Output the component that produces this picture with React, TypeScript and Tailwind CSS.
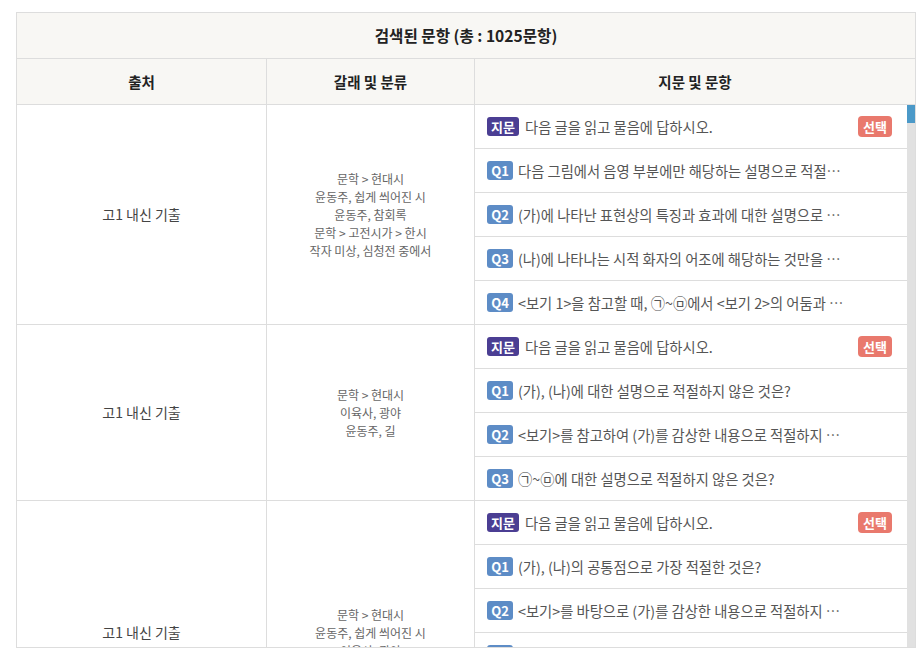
import React from "react";

type Item = { label: string; text: string };
type Group = { source: string; cats: string[]; items: Item[] };

const PASSAGE = "다음 글을 읽고 물음에 답하시오.";

const groups: Group[] = [
  {
    source: "고1 내신 기출",
    cats: [
      "문학 > 현대시",
      "윤동주, 쉽게 씌어진 시",
      "윤동주, 참회록",
      "문학 > 고전시가 > 한시",
      "작자 미상, 심청전 중에서",
    ],
    items: [
      { label: "Q1", text: "다음 그림에서 음영 부분에만 해당하는 설명으로 적절하지 않은 것은?" },
      { label: "Q2", text: "(가)에 나타난 표현상의 특징과 효과에 대한 설명으로 가장 적절한 것은?" },
      { label: "Q3", text: "(나)에 나타나는 시적 화자의 어조에 해당하는 것만을 <보기>에서 고른 것은?" },
      { label: "Q4", text: "<보기 1>을 참고할 때, ㉠~㉤에서 <보기 2>의 어둠과 같은 의미로 쓰인 것은?" },
    ],
  },
  {
    source: "고1 내신 기출",
    cats: ["문학 > 현대시", "이육사, 광야", "윤동주, 길"],
    items: [
      { label: "Q1", text: "(가), (나)에 대한 설명으로 적절하지 않은 것은?" },
      { label: "Q2", text: "<보기>를 참고하여 (가)를 감상한 내용으로 적절하지 않은 것은?" },
      { label: "Q3", text: "㉠~㉤에 대한 설명으로 적절하지 않은 것은?" },
    ],
  },
  {
    source: "고1 내신 기출",
    cats: ["문학 > 현대시", "윤동주, 쉽게 씌어진 시", "이육사, 광야"],
    items: [
      { label: "Q1", text: "(가), (나)의 공통점으로 가장 적절한 것은?" },
      { label: "Q2", text: "<보기>를 바탕으로 (가)를 감상한 내용으로 적절하지 않은 것은?" },
      { label: "Q3", text: "(가)의 시적 상황과 정서에 대한 이해로 적절한 것은?" },
      { label: "Q4", text: "㉠~㉤의 의미에 대한 설명으로 적절하지 않은 것은?" },
      { label: "Q5", text: "(나)의 화자가 지향하는 삶의 태도로 가장 적절한 것은?" },
    ],
  },
];

function Row({ group }: { group: Group }) {
  return (
    <div className="grid grid-cols-[250px_208px_1fr]">
      <div className="flex items-center justify-center border-r border-b border-[#dddddd] text-[14px] text-[#444]">
        {group.source}
      </div>
      <div className="flex flex-col items-center justify-center border-r border-b border-[#dddddd] text-[12px] leading-[18px] text-[#666]">
        {group.cats.map((c, i) => (
          <div key={i}>{c}</div>
        ))}
      </div>
      <div className="flex flex-col">
        <div className="flex h-[44px] items-center border-b border-[#dddddd] pl-3 pr-[15px]">
          <div className="flex w-[360px] items-center">
            <span className="flex h-[19px] w-[32px] shrink-0 items-center justify-center rounded-[3px] bg-[#4b3e93] text-[13px] font-bold text-white">
              지문
            </span>
            <span className="ml-[6px] truncate text-[14.3px] text-[#555]">{PASSAGE}</span>
          </div>
          <button className="ml-auto flex h-[21px] w-[34px] items-center justify-center rounded-[4px] bg-[#e9796d] text-[13px] font-bold text-white">
            선택
          </button>
        </div>
        {group.items.map((it) => (
          <div
            key={it.label}
            className="flex h-[44px] items-center border-b border-[#dddddd] pl-3 pr-[15px]"
          >
            <div className="flex w-[360px] items-center">
              <span className="flex h-[19px] w-[26px] shrink-0 items-center justify-center rounded-[3px] bg-[#5d8cc6] text-[13px] font-bold text-white">
                {it.label}
              </span>
              <span className="ml-[5px] min-w-0 truncate text-[14.3px] text-[#555]">{it.text}</span>
            </div>
          </div>
        ))}
      </div>
    </div>
  );
}

export default function App() {
  return (
    <div
      className="min-h-screen bg-white pt-3 pl-4"
      style={{ fontFamily: '"Noto Sans CJK KR", "Noto Sans", sans-serif' }}
    >
      <div className="w-[900px] border border-[#dddddd]">
        <div className="flex h-[46px] items-center justify-center border-b border-[#dddddd] bg-[#f8f7f4] text-[15.6px] font-bold text-[#222]">
          검색된 문항 (총 : 1025문항)
        </div>
        <div className="grid h-[46px] grid-cols-[250px_208px_1fr] border-b border-[#dddddd] bg-[#f8f7f4] text-[14.5px] font-bold text-[#222]">
          <div className="flex items-center justify-center border-r border-[#dddddd]">출처</div>
          <div className="flex items-center justify-center border-r border-[#dddddd]">갈래 및 분류</div>
          <div className="flex items-center justify-center">지문 및 문항</div>
        </div>
        <div className="flex h-[542px]">
          <div className="w-[890px] overflow-hidden">
            {groups.map((g, i) => (
              <Row key={i} group={g} />
            ))}
          </div>
          {/* scrollbar */}
          <div className="w-[8px] bg-[#e1e1e1]">
            <div className="h-[18px] bg-[#4b99c8]" />
          </div>
        </div>
      </div>
    </div>
  );
}
